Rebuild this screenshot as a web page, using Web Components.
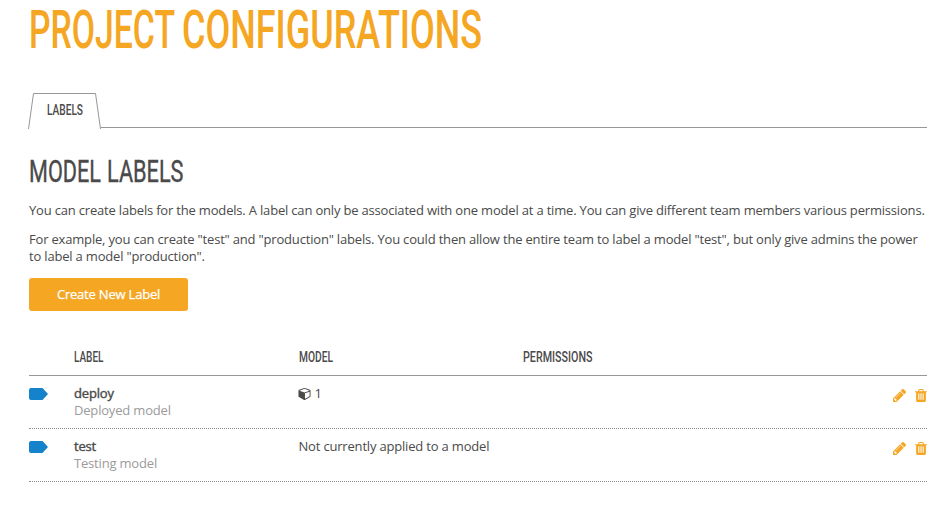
<!DOCTYPE html>
<html lang="en">
<head>
<meta charset="utf-8">
<title>Project Configurations</title>
<style>
html,body{margin:0;background:#fff}
body{font:13px/17px "Open Sans",sans-serif;letter-spacing:-.184px;color:#4a4a4a}
</style>
</head>
<body>
<project-page></project-page>
<script>
const define = (name, html, setup) => customElements.define(name, class extends HTMLElement {
  connectedCallback() {
    if (this.shadowRoot) return;
    const t = document.createElement('template');
    t.innerHTML = html;
    this.attachShadow({mode: 'open'}).append(t.content.cloneNode(true));
    if (setup) setup(this, this.shadowRoot);
  }
});

// Condensed display text, squeezed to the measure given in "width".
define('condensed-text', `<style>
:host{display:block;white-space:nowrap;font-family:Roboto,sans-serif;letter-spacing:0}
span{display:inline-block;transform-origin:0 50%}
</style><span><slot></slot></span>`, (el, root) => {
  const span = root.querySelector('span');
  const w = +el.getAttribute('width');
  el.style.width = w + 'px';
  span.style.transform = 'scaleX(' + w / span.getBoundingClientRect().width + ')';
});

const icons = {
  pencil: 'M491 1536l91-91-235-235-91 91v107h128v128h107zm523-928q0-22-22-22-10 0-17 7l-542 542q-7 7-7 17 0 22 22 22 10 0 17-7l542-542q7-7 7-17zm-54-192l416 416-832 832h-416v-416zm683 96q0 53-37 90l-166 166-416-416 166-165q36-38 90-38 53 0 91 38l235 234q37 39 37 91z',
  trash: 'M704 1376v-704q0-14-9-23t-23-9h-64q-14 0-23 9t-9 23v704q0 14 9 23t23 9h64q14 0 23-9t9-23zm256 0v-704q0-14-9-23t-23-9h-64q-14 0-23 9t-9 23v704q0 14 9 23t23 9h64q14 0 23-9t9-23zm256 0v-704q0-14-9-23t-23-9h-64q-14 0-23 9t-9 23v704q0 14 9 23t23 9h64q14 0 23-9t9-23zm-544-992h448l-48-117q-7-9-17-11h-317q-10 2-17 11zm928 32v64q0 14-9 23t-23 9h-96v948q0 83-47 143.500t-113 60.500h-832q-66 0-113-58.500t-47-141.500v-952h-96q-14 0-23-9t-9-23v-64q0-14 9-23t23-9h309l70-167q15-37 54-63t79-26h320q40 0 79 26t54 63l70 167h309q14 0 23 9t9 23z',
  cube: 'M896 1629l640-349v-636l-640 233v752zm-64-865l698-254-698-254-698 254zm832-252v768q0 35-18 65t-49 47l-704 384q-28 16-61 16t-61-16l-704-384q-31-17-49-47t-18-65v-768q0-40 23-73t61-47l704-256q22-8 44-8t44 8l704 256q38 14 61 47t23 73z'
};
const boxes = {pencil: '128 149 1515 1515', trash: '192 128 1408 1536', cube: '0 0 1664 1792'};
define('glyph-icon', `<style>
:host{display:block;flex:none}svg{display:block;width:100%;height:100%;fill:currentColor}
</style><svg><path/></svg>`, (el, root) => {
  const n = el.getAttribute('name');
  root.querySelector('svg').setAttribute('viewBox', boxes[n]);
  root.querySelector('path').setAttribute('d', icons[n]);
});

define('tab-bar', `<style>
:host{display:flex;height:36px;margin-left:-1px;align-items:flex-start}
.tab{display:grid;width:73px;height:36px;flex:none}
.tab>*{grid-area:1/1}
svg{display:block}
condensed-text{font-size:14px;line-height:18px;font-weight:500;margin:8px 0 0 18.500px}
.line{flex:1;height:34px;border-bottom:1px solid #979797}
</style><div class="tab"><svg width="73" height="36" fill="none" stroke="#979797"><path d="M.5 36L5.500 .5H67.500L72.500 36"/></svg>
<condensed-text width="36"><slot></slot></condensed-text></div><div class="line"></div>`);

define('primary-button', `<style>
:host{display:block}
button{display:block;width:159px;height:33px;border:0;border-radius:3px;padding:0;background:#f5a623;color:#fff;font:13px/33px "Open Sans",sans-serif;letter-spacing:-.2px;-webkit-text-stroke:.25px #fff}
</style><button><slot></slot></button>`);

define('label-header', `<style>
:host{display:grid;grid-template-columns:45px 224.500px 224.500px 1fr;height:27px;border-bottom:1px solid #979797;font-size:14px;line-height:18px;font-weight:500}
</style><span></span><condensed-text width="29.500">LABEL</condensed-text><condensed-text width="34">MODEL</condensed-text><condensed-text width="69.500">PERMISSIONS</condensed-text>`);

define('label-row', `<style>
:host{display:grid;grid-template-columns:45px 224.500px 1fr auto;height:43px;padding-top:9px;border-bottom:1px dotted #8a8a8a}
.flag{width:19px;height:12px;margin-top:3px;display:block}
.name{-webkit-text-stroke:.4px #4a4a4a}
.desc{color:#9b9b9b}
.model{display:flex;gap:3.500px}
.actions{display:flex;gap:9px;color:#f5a623;margin-top:4px}
.p{width:13px;height:13px}.t{width:12px;height:13px}
</style><svg class="flag" viewBox="0 0 19 12"><path fill="#1583cc" d="M2 0h11.500l5.500 6-5.500 6H2Q0 12 0 10V2Q0 0 2 0z"/></svg>
<div><div class="name"><slot name="name"></slot></div><div class="desc"><slot name="desc"></slot></div></div>
<div class="model"><slot></slot></div>
<div class="actions"><glyph-icon class="p" name="pencil"></glyph-icon><glyph-icon class="t" name="trash"></glyph-icon></div>`);

define('project-page', `<style>
:host{display:block;box-sizing:border-box;width:951px;height:505px;padding:0 24px 0 29px}
h1,h2,p{margin:0;font-weight:400}
h1,h2{display:flex}
h1{color:#f5a623;height:93px;gap:7.500px}
h1 condensed-text{font-size:53px;line-height:61px;font-weight:500}
h1 condensed-text:first-child{margin-left:-.5px}
h2{height:73px;gap:6.500px}
h2 condensed-text{font-size:31px;line-height:38px;padding-top:24px;-webkit-text-stroke:.4px #4a4a4a}
h2 condensed-text:first-child{margin-left:-.5px}
p{margin-bottom:12px}
.wide{white-space:nowrap}
primary-button{margin-top:13px}
label-header{margin-top:37px}
.cube{width:13px;height:13px;margin-top:2px;margin-left:-.5px}
</style>
<h1><condensed-text width="146">PROJECT</condensed-text><condensed-text width="300">CONFIGURATIONS</condensed-text></h1>
<tab-bar>LABELS</tab-bar>
<h2><condensed-text width="72">MODEL</condensed-text><condensed-text width="76.500">LABELS</condensed-text></h2>
<p class="wide">You can create labels for the models. A label can only be associated with one model at a time. You can give different team members various permissions.</p>
<p>For example, you can create "test" and "production" labels. You could then allow the entire team to label a model "test", but only give admins the power to label a model "production".</p>
<primary-button>Create New Label</primary-button>
<label-header></label-header>
<label-row><span slot="name">deploy</span><span slot="desc">Deployed model</span><glyph-icon class="cube" name="cube"></glyph-icon><span>1</span></label-row>
<label-row><span slot="name">test</span><span slot="desc">Testing model</span><span>Not currently applied to a model</span></label-row>`);
</script>
</body>
</html>
